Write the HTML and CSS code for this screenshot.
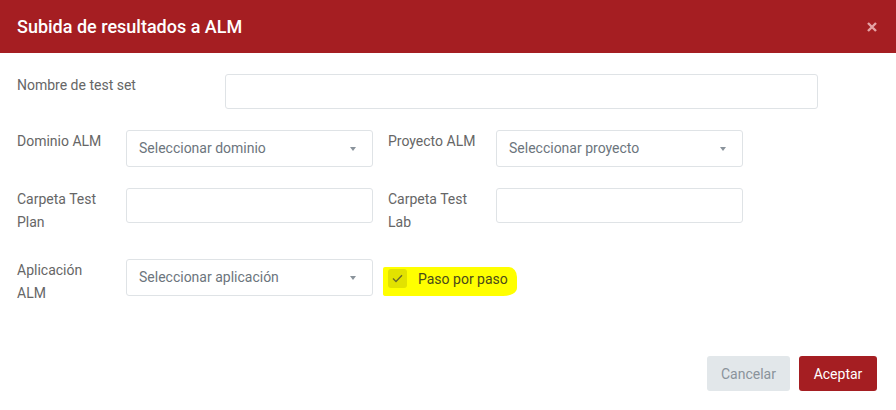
FILE: index.html
```html
<!DOCTYPE html>
<html lang="es">
<head>
    <meta charset="UTF-8">
    <meta name="viewport" content="width=device-width, initial-scale=1.0">
    <title>Subida de resultados a ALM</title>
    <link rel="stylesheet" href="styles.css">
</head>
<body>
    <div class="modal">
        <div class="modal-header">
            <h1>Subida de resultados a ALM</h1>
            <span class="close">
                <svg width="10" height="10" viewBox="0 0 10 10"><path d="M1 1 L9 9 M9 1 L1 9" stroke="#e5a3a5" stroke-width="2.4"/></svg>
            </span>
        </div>
        <div class="modal-body">
            <div class="row row-first">
                <label class="lbl lbl-wide">Nombre de test set</label>
                <input type="text" class="field field-wide">
            </div>
            <div class="row">
                <label class="lbl">Dominio ALM</label>
                <div class="select">Seleccionar dominio<span class="caret"></span></div>
                <label class="lbl lbl-right">Proyecto ALM</label>
                <div class="select">Seleccionar proyecto<span class="caret"></span></div>
            </div>
            <div class="row">
                <label class="lbl">Carpeta Test Plan</label>
                <input type="text" class="field">
                <label class="lbl lbl-right">Carpeta Test Lab</label>
                <input type="text" class="field">
            </div>
            <div class="row">
                <label class="lbl">Aplicación ALM</label>
                <div class="select">Seleccionar aplicación<span class="caret"></span></div>
                <div class="check-wrap">
                    <span class="highlight"></span>
                    <span class="checkbox">
                        <svg width="11" height="9" viewBox="0 0 11 9"><path d="M1 4.5 L4 7.5 L10 1.2" fill="none" stroke="#6b6b2a" stroke-width="1.4"/></svg>
                    </span>
                    <span class="check-text">Paso por paso</span>
                </div>
            </div>
        </div>
        <div class="modal-footer">
            <button type="button" class="btn btn-cancel">Cancelar</button>
            <button type="button" class="btn btn-ok">Aceptar</button>
        </div>
    </div>
</body>
</html>
```

FILE: styles.css
```css
body {
    margin: 0;
    background-color: #fff;
    font-family: Roboto, "Liberation Sans", Arial, sans-serif;
}
.modal {
    width: 896px;
    height: 410px;
}
.modal-header {
    background-color: #a51e22;
    height: 53px;
    display: flex;
    align-items: center;
    justify-content: space-between;
    padding: 0 19px 0 17px;
    box-sizing: border-box;
}
.modal-header h1 {
    margin: 0;
    color: #fff;
    font-size: 18px;
    font-weight: 500;
    margin-top: -1px;
}
.close {
    display: flex;
}
.modal-body {
    padding: 21px 17px 0;
}
.row {
    display: flex;
    align-items: flex-start;
    margin-bottom: 21px;
}
.lbl {
    width: 109px;
    box-sizing: border-box;
    padding-right: 14px;
    font-size: 14px;
    line-height: 23px;
    color: #666;
    padding-bottom: 4px;
}
.lbl-wide {
    width: 208px;
}
.lbl-right {
    width: 108px;
    margin-left: 15px;
}
.row-first .lbl {
    padding-bottom: 0;
}
.field {
    width: 247px;
    height: 35px;
    box-sizing: border-box;
    border: 1px solid #dfe3e6;
    border-radius: 3px;
    margin: 0;
    padding: 0 12px;
}
.field-wide {
    width: 593px;
}
.select {
    position: relative;
    width: 247px;
    height: 37px;
    box-sizing: border-box;
    border: 1px solid #dfe3e6;
    border-radius: 3px;
    padding: 0 12px;
    font-size: 14px;
    line-height: 35px;
    color: #6c757d;
}
.caret {
    position: absolute;
    right: 16px;
    top: 16px;
    border-left: 3.5px solid transparent;
    border-right: 3.5px solid transparent;
    border-top: 4px solid #8a939b;
}
.check-wrap {
    position: relative;
    display: flex;
    align-items: center;
    margin-left: 15px;
    margin-top: 10px;
    height: 19px;
}
.highlight {
    position: absolute;
    left: -5px;
    top: -2px;
    width: 134px;
    height: 29px;
    background-color: #ffff00;
    border-radius: 2px 8px 14px 3px / 2px 10px 8px 2px;
}
.checkbox {
    position: relative;
    width: 19px;
    height: 19px;
    border-radius: 3px;
    background-color: #e2e200;
    display: flex;
    align-items: center;
    justify-content: center;
}
.check-text {
    position: relative;
    margin-left: 11px;
    font-size: 14px;
    color: #4a4a1a;
}
.modal-footer {
    display: flex;
    justify-content: flex-end;
    gap: 9px;
    padding: 0 19px;
    margin-top: 47px;
}
.btn {
    height: 35px;
    border: none;
    border-radius: 3px;
    font-family: Roboto, "Liberation Sans", Arial, sans-serif;
    font-size: 14px;
    padding: 0 12px;
}
.btn-cancel {
    background-color: #e2e7ea;
    color: #8a939b;
    width: 83px;
}
.btn-ok {
    background-color: #a51e22;
    color: #fff;
    width: 78px;
}
```
